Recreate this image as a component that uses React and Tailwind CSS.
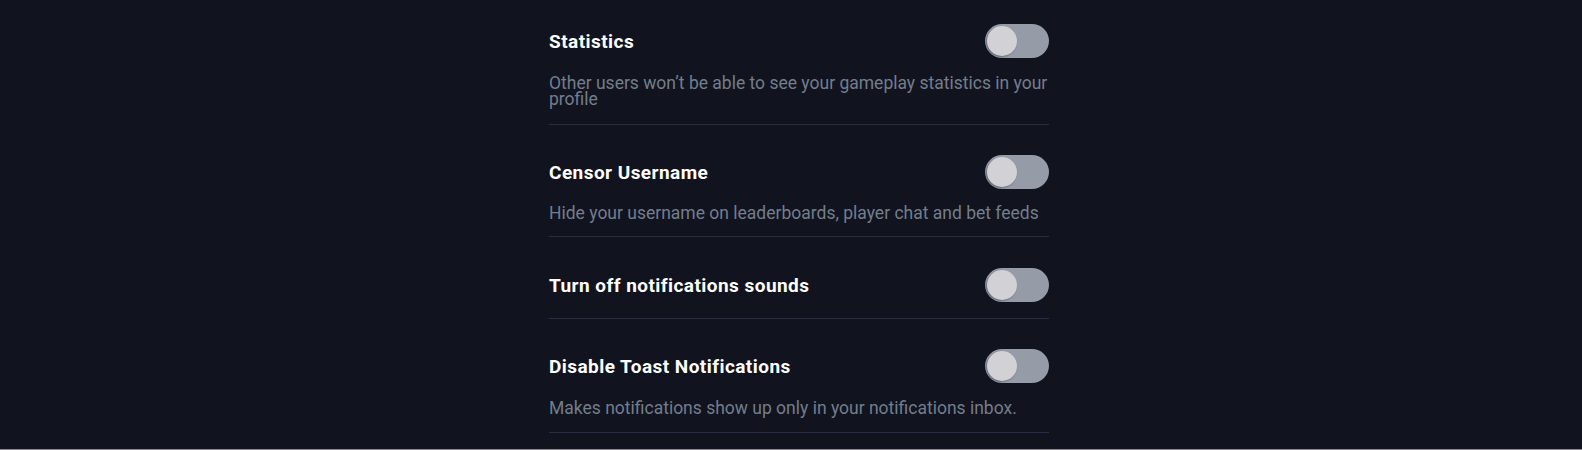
import React from "react";

const rows = [
  {
    title: "Statistics",
    desc: "Other users won\u2019t be able to see your gameplay statistics in your profile",
    pt: "pt-6",
    mt: "mt-[17px]",
    pb: "pb-[17px]",
  },
  {
    title: "Censor Username",
    desc: "Hide your username on leaderboards, player chat and bet feeds",
    pt: "pt-[30px]",
    mt: "mt-4",
    pb: "pb-[15px]",
  },
  {
    title: "Turn off notifications sounds",
    desc: null,
    pt: "pt-[31px]",
    mt: "",
    pb: "pb-4",
  },
  {
    title: "Disable Toast Notifications",
    desc: "Makes notifications show up only in your notifications inbox.",
    pt: "pt-[30px]",
    mt: "mt-[17px]",
    pb: "pb-4",
  },
];

function Toggle() {
  return (
    <div className="w-[64px] h-[34px] rounded-full bg-[#959ba7] flex items-center px-[2px] shrink-0">
      <div className="w-[30px] h-[30px] rounded-full bg-[#d2d2d6] shadow-[-1px_1px_2px_rgba(40,44,60,0.45)]" />
    </div>
  );
}

export default function App() {
  return (
    <div
      className="w-full h-[450px] flex flex-col bg-[#11131f] overflow-hidden"
      style={{ fontFamily: "Roboto, 'Liberation Sans', sans-serif" }}
    >
      <div className="flex-1 flex justify-center pl-4">
        <div className="w-[500px] flex flex-col">
          {rows.map((r) => (
            <div key={r.title} className={`border-b border-[#2c2b45] ${r.pt} ${r.pb}`}>
              <div className="h-[34px] flex items-center justify-between">
                <span className="pt-[2px] text-[19px] font-bold tracking-[0.45px] text-white">{r.title}</span>
                <Toggle />
              </div>
              {r.desc && (
                <p className={`${r.mt} text-[17.5px] leading-4 text-[#737e8c]`}>{r.desc}</p>
              )}
            </div>
          ))}
        </div>
      </div>
      <div className="h-px w-full bg-[#8b8b90]" />
    </div>
  );
}
